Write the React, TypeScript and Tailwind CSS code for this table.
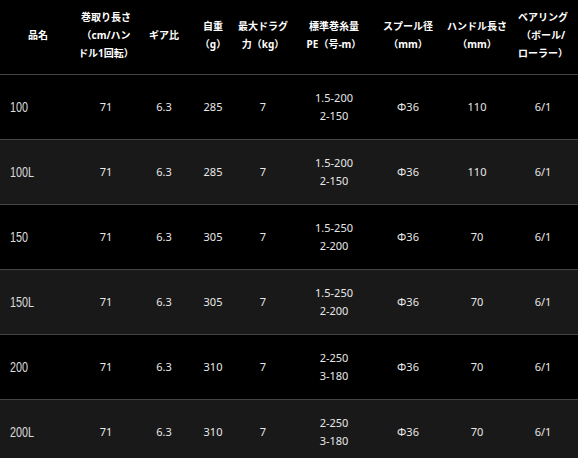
const headers: { lines: string[]; w: string }[] = [
  { lines: ["品名"], w: "w-[76px]" },
  { lines: ["巻取り長さ", "（cm/ハン", "ドル1回転）"], w: "w-[60px]" },
  { lines: ["ギア比"], w: "w-[56px]" },
  { lines: ["自重", "（g）"], w: "w-[42px]" },
  { lines: ["最大ドラグ", "力（kg）"], w: "w-[58px]" },
  { lines: ["標準巻糸量", "PE（号-m）"], w: "w-[84px]" },
  { lines: ["スプール径", "（mm）"], w: "w-[64px]" },
  { lines: ["ハンドル長さ", "（mm）"], w: "w-[74px]" },
  { lines: ["ベアリング", "（ボール/", "ローラー）"], w: "w-[64px]" },
];

const rows = [
  { name: "100", weight: "285", pe: ["1.5-200", "2-150"], handle: "110" },
  { name: "100L", weight: "285", pe: ["1.5-200", "2-150"], handle: "110" },
  { name: "150", weight: "305", pe: ["1.5-250", "2-200"], handle: "70" },
  { name: "150L", weight: "305", pe: ["1.5-250", "2-200"], handle: "70" },
  { name: "200", weight: "310", pe: ["2-250", "3-180"], handle: "70" },
  { name: "200L", weight: "310", pe: ["2-250", "3-180"], handle: "70" },
];

const cell = "border-b border-[#444] text-center align-middle";

export default function App() {
  return (
    <div className="w-[578px] h-[458px] overflow-hidden bg-black font-['Noto_Sans','Noto_Sans_CJK_JP',sans-serif]">
      <table className="w-[578px] table-fixed border-separate border-spacing-0">
        <thead>
          <tr>
            {headers.map((h, i) => (
              <th
                key={i}
                className={`${h.w} h-[75px] pb-[4px] ${cell} text-[10px] leading-[18px] font-bold text-white ${
                  i === 8 ? "pr-[6px]" : ""
                }`}
              >
                {h.lines.map((l) => (
                  <div key={l} className="whitespace-nowrap">
                    {l}
                  </div>
                ))}
              </th>
            ))}
          </tr>
        </thead>
        <tbody className="text-[11px] leading-[18px] text-[#e8e8e8]">
          {rows.map((r, i) => (
            <tr key={r.name} className={i % 2 ? "bg-[#191919]" : "bg-black"}>
              <td className="h-[65px] border-b border-[#444] align-middle text-left pl-[10px]">
                <span className="inline-block origin-left scale-x-[0.72] text-[15px] text-[#dcdcdc] font-['Liberation_Sans',sans-serif]">
                  {r.name}
                </span>
              </td>
              <td className={cell}>71</td>
              <td className={cell}>6.3</td>
              <td className={cell}>{r.weight}</td>
              <td className={cell}>7</td>
              <td className={cell}>
                <div>{r.pe[0]}</div>
                <div>{r.pe[1]}</div>
              </td>
              <td className={cell}>Φ36</td>
              <td className={cell}>{r.handle}</td>
              <td className={`${cell} pr-[6px]`}>6/1</td>
            </tr>
          ))}
        </tbody>
      </table>
    </div>
  );
}
